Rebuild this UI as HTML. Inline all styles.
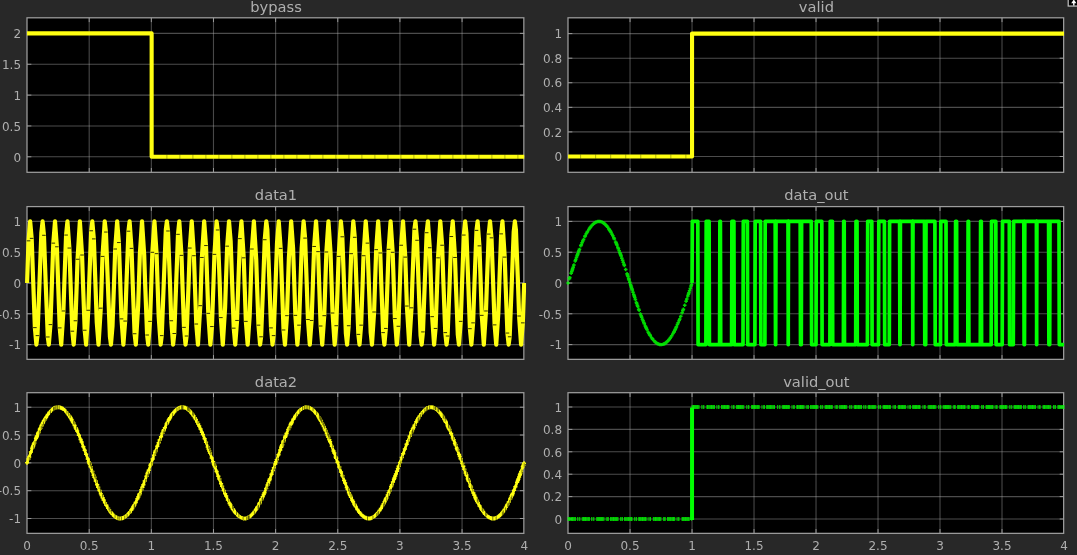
<!DOCTYPE html>
<html><head><meta charset="utf-8"><title>Scope</title>
<style>html,body{margin:0;padding:0;background:#282828;overflow:hidden}svg{display:block;filter:blur(0.4px)}</style></head>
<body>
<svg width="1077" height="555" viewBox="0 0 1077 555" font-family="'DejaVu Sans','Liberation Sans',sans-serif" fill="#afafaf">
<rect width="1077" height="555" fill="#282828"/>
<rect x="27.05" y="17.8" width="497.15" height="154.5" fill="#000"/>
<path d="M89.19 17.8V172.3M151.34 17.8V172.3M213.48 17.8V172.3M275.62 17.8V172.3M337.77 17.8V172.3M399.91 17.8V172.3M462.06 17.8V172.3" stroke="#b4b4b4" stroke-opacity="0.4" stroke-width="1.1" fill="none"/>
<path d="M27.05 156.8H524.2M27.05 125.95H524.2M27.05 95.1H524.2M27.05 64.25H524.2M27.05 33.4H524.2" stroke="#b4b4b4" stroke-opacity="0.42" stroke-width="1.1" fill="none"/>
<path d="M89.19 17.8v4.3M89.19 172.3v-4.3M151.34 17.8v4.3M151.34 172.3v-4.3M213.48 17.8v4.3M213.48 172.3v-4.3M275.62 17.8v4.3M275.62 172.3v-4.3M337.77 17.8v4.3M337.77 172.3v-4.3M399.91 17.8v4.3M399.91 172.3v-4.3M462.06 17.8v4.3M462.06 172.3v-4.3M27.05 156.8h4.3M524.2 156.8h-4.3M27.05 125.95h4.3M524.2 125.95h-4.3M27.05 95.1h4.3M524.2 95.1h-4.3M27.05 64.25h4.3M524.2 64.25h-4.3M27.05 33.4h4.3M524.2 33.4h-4.3" stroke="#afafaf" stroke-width="1" fill="none" opacity="0.8"/>
<rect x="27" y="17.8" width="496.85" height="154.5" fill="none" stroke="#9e9e9e" stroke-width="1.25"/>
<clipPath id="cbypass"><rect x="25.05" y="17.8" width="501.15" height="154.5"/></clipPath>
<g clip-path="url(#cbypass)">
<path d="M27.05 33.4H151.64V156.8H524.2" stroke="#ffff11" stroke-width="4.1" fill="none" stroke-linejoin="round"/>
<path d="M166.9 154.7v4.2M179.9 154.7v4.2M192.9 154.7v4.2M205.9 154.7v4.2M218.9 154.7v4.2M231.9 154.7v4.2M244.9 154.7v4.2M257.9 154.7v4.2M270.9 154.7v4.2M283.9 154.7v4.2M296.9 154.7v4.2M309.9 154.7v4.2M322.9 154.7v4.2M335.9 154.7v4.2M348.9 154.7v4.2M361.9 154.7v4.2M374.9 154.7v4.2M387.9 154.7v4.2M400.9 154.7v4.2M413.9 154.7v4.2M426.9 154.7v4.2M439.9 154.7v4.2M452.9 154.7v4.2M465.9 154.7v4.2M478.9 154.7v4.2M491.9 154.7v4.2M504.9 154.7v4.2M517.9 154.7v4.2" stroke="#000" stroke-width="1" fill="none" opacity="0.3"/>
</g>
<text x="276.02" y="11.8" font-size="14.67" text-anchor="middle">bypass</text>
<text x="21.05" y="161.5" font-size="12" text-anchor="end">0</text>
<text x="21.05" y="130.65" font-size="12" text-anchor="end">0.5</text>
<text x="21.05" y="99.8" font-size="12" text-anchor="end">1</text>
<text x="21.05" y="68.95" font-size="12" text-anchor="end">1.5</text>
<text x="21.05" y="38.1" font-size="12" text-anchor="end">2</text>
<rect x="568.05" y="17.8" width="495.95" height="154.5" fill="#000"/>
<path d="M630.04 17.8V172.3M692.04 17.8V172.3M754.03 17.8V172.3M816.02 17.8V172.3M878.02 17.8V172.3M940.01 17.8V172.3M1002.01 17.8V172.3" stroke="#b4b4b4" stroke-opacity="0.4" stroke-width="1.1" fill="none"/>
<path d="M568.05 156.5H1064M568.05 131.92H1064M568.05 107.34H1064M568.05 82.76H1064M568.05 58.18H1064M568.05 33.6H1064" stroke="#b4b4b4" stroke-opacity="0.42" stroke-width="1.1" fill="none"/>
<path d="M630.04 17.8v4.3M630.04 172.3v-4.3M692.04 17.8v4.3M692.04 172.3v-4.3M754.03 17.8v4.3M754.03 172.3v-4.3M816.02 17.8v4.3M816.02 172.3v-4.3M878.02 17.8v4.3M878.02 172.3v-4.3M940.01 17.8v4.3M940.01 172.3v-4.3M1002.01 17.8v4.3M1002.01 172.3v-4.3M568.05 156.5h4.3M1064 156.5h-4.3M568.05 131.92h4.3M1064 131.92h-4.3M568.05 107.34h4.3M1064 107.34h-4.3M568.05 82.76h4.3M1064 82.76h-4.3M568.05 58.18h4.3M1064 58.18h-4.3M568.05 33.6h4.3M1064 33.6h-4.3" stroke="#afafaf" stroke-width="1" fill="none" opacity="0.8"/>
<rect x="568" y="17.8" width="495.65" height="154.5" fill="none" stroke="#9e9e9e" stroke-width="1.25"/>
<clipPath id="cvalid"><rect x="566.05" y="17.8" width="499.95" height="154.5"/></clipPath>
<g clip-path="url(#cvalid)">
<path d="M568.05 156.5H692.04V33.6H1064" stroke="#ffff11" stroke-width="4.1" fill="none" stroke-linejoin="round"/>
<path d="M580.6 154.4v4.2M595.64 154.4v4.2M610.68 154.4v4.2M625.72 154.4v4.2M640.76 154.4v4.2M655.8 154.4v4.2M670.84 154.4v4.2M685.88 154.4v4.2" stroke="#000" stroke-width="1" fill="none" opacity="0.3"/>
</g>
<text x="816.42" y="11.8" font-size="14.67" text-anchor="middle">valid</text>
<text x="562.05" y="161.2" font-size="12" text-anchor="end">0</text>
<text x="562.05" y="136.62" font-size="12" text-anchor="end">0.2</text>
<text x="562.05" y="112.04" font-size="12" text-anchor="end">0.4</text>
<text x="562.05" y="87.46" font-size="12" text-anchor="end">0.6</text>
<text x="562.05" y="62.88" font-size="12" text-anchor="end">0.8</text>
<text x="562.05" y="38.3" font-size="12" text-anchor="end">1</text>
<rect x="27.05" y="206.6" width="497.15" height="152.75" fill="#000"/>
<path d="M89.19 206.6V359.35M151.34 206.6V359.35M213.48 206.6V359.35M275.62 206.6V359.35M337.77 206.6V359.35M399.91 206.6V359.35M462.06 206.6V359.35" stroke="#b4b4b4" stroke-opacity="0.4" stroke-width="1.1" fill="none"/>
<path d="M27.05 344.6H524.2M27.05 313.8H524.2M27.05 283H524.2M27.05 252.2H524.2M27.05 221.4H524.2" stroke="#b4b4b4" stroke-opacity="0.42" stroke-width="1.1" fill="none"/>
<path d="M89.19 206.6v4.3M89.19 359.35v-4.3M151.34 206.6v4.3M151.34 359.35v-4.3M213.48 206.6v4.3M213.48 359.35v-4.3M275.62 206.6v4.3M275.62 359.35v-4.3M337.77 206.6v4.3M337.77 359.35v-4.3M399.91 206.6v4.3M399.91 359.35v-4.3M462.06 206.6v4.3M462.06 359.35v-4.3M27.05 344.6h4.3M524.2 344.6h-4.3M27.05 313.8h4.3M524.2 313.8h-4.3M27.05 283h4.3M524.2 283h-4.3M27.05 252.2h4.3M524.2 252.2h-4.3M27.05 221.4h4.3M524.2 221.4h-4.3" stroke="#afafaf" stroke-width="1" fill="none" opacity="0.8"/>
<rect x="27" y="206.6" width="496.85" height="152.75" fill="none" stroke="#9e9e9e" stroke-width="1.25"/>
<clipPath id="cdata1"><rect x="25.05" y="206.6" width="501.15" height="152.75"/></clipPath>
<g clip-path="url(#cdata1)">
<path d="M27.05 283L28.54 240.83L30.16 221.4L31.66 238.36L33.26 283L34.87 327.64L36.37 344.6L37.45 335.62L39.48 283L41.37 232.71L42.59 221.4L43.94 235.29L45.69 283L47.81 336.98L48.8 344.6L50.44 324.6L51.91 283L53.3 243.14L55.01 221.4L56.88 246.79L58.12 283L59.74 327.9L61.23 344.6L63.4 310.97L64.34 283L66.1 235.05L67.44 221.4L69.36 248.06L70.55 283L72.33 331.2L73.66 344.6L75.46 320.76L76.77 283L77.55 259.25L79.87 221.4L82.05 255.03L82.98 283L84.71 330.22L86.09 344.6L88.29 310.27L89.19 283L91.19 230.78L92.3 221.4L93.83 238.9L95.41 283L96.76 321.97L98.52 344.6L100.79 308.17L101.62 283L102.5 256.42L104.73 221.4L105.91 232.05L107.84 283L109.9 336.22L110.94 344.6L112.53 325.73L114.05 283L115.21 249.02L117.16 221.4L118.85 242.55L120.27 283L121.5 318.89L123.37 344.6L125.16 321.06L126.48 283L128.46 231.2L129.59 221.4L131.51 248.38L132.69 283L134.61 333.73L135.8 344.6L138.15 306.04L138.91 283L139.88 254L142.02 221.4L144.19 255.03L145.12 283L147.11 335.01L148.23 344.6L150.01 321.36L151.34 283L152.37 252.31L154.44 221.4L156.57 253.66L157.55 283L158.68 316.33L160.66 344.6L161.74 335.62L163.77 283L165.87 229.21L166.87 221.4L167.99 230.99L169.98 283L171.29 320.76L173.09 344.6L174.29 333.51L176.2 283L178 234.33L179.3 221.4L181.49 255.38L182.41 283L184 327.37L185.52 344.6L186.57 336.02L188.62 283L189.82 248.06L191.73 221.4L193.93 255.73L194.84 283L196.28 324.03L197.95 344.6L200.31 305.68L201.05 283L201.9 257.47L204.16 221.4L205.97 245.55L207.27 283L208.29 313.35L210.37 344.6L211.93 326.56L213.48 283L214.44 254.35L216.59 221.4L217.64 229.98L219.7 283L220.88 317.62L222.8 344.6L225.1 307.46L225.91 283L227.18 246.17L229.02 221.4L230.65 241.11L232.12 283L233.75 328.17L235.23 344.6L237.05 320.45L238.34 283L239.93 238.63L241.45 221.4L243.72 257.83L244.55 283L245.88 321.36L247.66 344.6L249.64 316.33L250.77 283L251.92 249.02L253.87 221.4L256.21 259.61L256.98 283L258.47 325.17L260.09 344.6L261.1 336.79L263.2 283L264.74 239.72L266.3 221.4L267.32 229.4L269.41 283L271.03 327.9L272.52 344.6L273.6 335.62L275.62 283L277 243.44L278.73 221.4L280.66 248.38L281.84 283L283.55 329.97L284.95 344.6L286.95 315.68L288.05 283L288.89 257.83L291.16 221.4L293.07 248.06L294.27 283L295.36 315.35L297.38 344.6L298.99 325.17L300.48 283L301.66 248.38L303.59 221.4L305.08 238.1L306.7 283L307.95 319.52L309.8 344.6L311.62 320.45L312.91 283L314.17 246.48L316.02 221.4L318.07 251.64L319.13 283L320.65 326.01L322.23 344.6L324.23 315.68L325.34 283L326.38 251.98L328.45 221.4L330.54 252.65L331.55 283L332.56 313.01L334.66 344.6L336.25 325.73L337.77 283L338.65 256.42L340.88 221.4L342.31 236.79L343.98 283L345.87 333.29L347.09 344.6L348.68 325.73L350.2 283L351.18 253.66L353.3 221.4L354.76 237.31L356.41 283L358.36 334.38L359.52 344.6L361.13 325.17L362.63 283L363.53 255.73L365.73 221.4L367.45 243.14L368.84 283L370.69 332.61L371.95 344.6L374.09 312L375.06 283L376.19 249.67L378.16 221.4L380.26 252.99L381.27 283L383.12 332.61L384.38 344.6L385.84 328.43L387.48 283L388.63 249.34L390.59 221.4L392.67 252.31L393.7 283L394.92 318.58L396.81 344.6L398.37 326.28L399.91 283L401.22 245.24L403.02 221.4L405.27 257.12L406.13 283L406.89 306.04L409.23 344.6L411.52 307.82L412.34 283L414.44 229.21L415.45 221.4L417.04 240.27L418.56 283L420.57 335.42L421.66 344.6L422.96 331.91L424.77 283L426.66 232.71L427.88 221.4L429.78 247.74L430.98 283L432.13 316.66L434.09 344.6L435.56 328.43L437.2 283L438.03 257.83L440.31 221.4L442.11 245.24L443.41 283L445.27 332.61L446.52 344.6L447.58 336.02L449.63 283L451.32 236.54L452.73 221.4L455 257.47L455.84 283L457.82 334.8L458.95 344.6L460.73 321.36L462.06 283L463.82 235.05L465.16 221.4L466.39 232.94L468.27 283L469.92 328.69L471.38 344.6L473.09 322.86L474.49 283L476.51 230.38L477.59 221.4L479.42 245.86L480.7 283L481.79 315.35L483.81 344.6L485.98 310.97L486.91 283L488.73 234.09L490.02 221.4L491.5 237.83L493.13 283L494.61 324.89L496.24 344.6L498.35 312.68L499.34 283L501.17 233.86L502.45 221.4L504.7 257.12L505.56 283L507.43 333.06L508.66 344.6L509.67 336.79L511.77 283L513.7 232.05L514.88 221.4L515.93 229.98L517.99 283L519.1 316.01L521.09 344.6L522.81 322.86L524.2 283" stroke="#ffff11" stroke-width="4.2" fill="none" stroke-linejoin="round"/>
<path d="M26.74 240.83h3.6M29.86 238.36h3.6M33.07 327.64h3.6M35.65 335.62h3.6M42.14 235.29h3.6M46.01 336.98h3.6M48.64 324.6h3.6M51.5 243.14h3.6M55.08 246.79h3.6M57.94 327.9h3.6M61.6 310.97h3.6M64.3 235.05h3.6M67.56 248.06h3.6M70.53 331.2h3.6M73.66 320.76h3.6M75.75 259.25h3.6M80.25 255.03h3.6M82.91 330.22h3.6M86.49 310.27h3.6M89.39 230.78h3.6M92.03 238.9h3.6M98.99 308.17h3.6M100.7 256.42h3.6M104.11 232.05h3.6M113.41 249.02h3.6M117.05 242.55h3.6M119.7 318.89h3.6M123.36 321.06h3.6M126.66 231.2h3.6M129.71 248.38h3.6M132.81 333.73h3.6M145.31 335.01h3.6M148.21 321.36h3.6M150.57 252.31h3.6M154.77 253.66h3.6M159.94 335.62h3.6M166.19 230.99h3.6M169.49 320.76h3.6M172.49 333.51h3.6M176.2 234.33h3.6M179.69 255.38h3.6M182.2 327.37h3.6M184.77 336.02h3.6M188.02 248.06h3.6M192.13 255.73h3.6M194.48 324.03h3.6M198.51 305.68h3.6M200.1 257.47h3.6M204.17 245.55h3.6M206.49 313.35h3.6M210.13 326.56h3.6M212.64 254.35h3.6M215.84 229.98h3.6M219.08 317.62h3.6M225.38 246.17h3.6M231.95 328.17h3.6M235.25 320.45h3.6M238.13 238.63h3.6M241.92 257.83h3.6M244.08 321.36h3.6M250.12 249.02h3.6M256.67 325.17h3.6M259.3 336.79h3.6M262.94 239.72h3.6M269.23 327.9h3.6M271.8 335.62h3.6M278.86 248.38h3.6M281.75 329.97h3.6M285.15 315.68h3.6M293.56 315.35h3.6M297.19 325.17h3.6M303.28 238.1h3.6M306.15 319.52h3.6M309.82 320.45h3.6M312.37 246.48h3.6M316.27 251.64h3.6M318.85 326.01h3.6M322.43 315.68h3.6M324.58 251.98h3.6M330.76 313.01h3.6M334.45 325.73h3.6M336.85 256.42h3.6M340.51 236.79h3.6M346.88 325.73h3.6M349.38 253.66h3.6M352.96 237.31h3.6M356.56 334.38h3.6M359.33 325.17h3.6M361.73 255.73h3.6M365.65 243.14h3.6M372.29 312h3.6M374.39 249.67h3.6M378.46 252.99h3.6M381.32 332.61h3.6M384.04 328.43h3.6M386.83 249.34h3.6M390.87 252.31h3.6M393.12 318.58h3.6M396.57 326.28h3.6M399.42 245.24h3.6M403.47 257.12h3.6M405.09 306.04h3.6M409.72 307.82h3.6M412.64 229.21h3.6M415.24 240.27h3.6M421.16 331.91h3.6M424.86 232.71h3.6M427.98 247.74h3.6M430.33 316.66h3.6M433.76 328.43h3.6M436.23 257.83h3.6M440.31 245.24h3.6M443.47 332.61h3.6M445.78 336.02h3.6M449.52 236.54h3.6M453.2 257.47h3.6M458.93 321.36h3.6M462.02 235.05h3.6M468.12 328.69h3.6M471.29 322.86h3.6M474.71 230.38h3.6M477.62 245.86h3.6M479.99 315.35h3.6M484.18 310.97h3.6M486.93 234.09h3.6M489.7 237.83h3.6M492.81 324.89h3.6M499.37 233.86h3.6M502.9 257.12h3.6M505.63 333.06h3.6M507.87 336.79h3.6M517.3 316.01h3.6M521.01 322.86h3.6" stroke="#111100" stroke-width="1" fill="none" opacity="0.85"/>
</g>
<text x="276.02" y="199.9" font-size="14.67" text-anchor="middle">data1</text>
<text x="21.05" y="349.3" font-size="12" text-anchor="end">-1</text>
<text x="21.05" y="318.5" font-size="12" text-anchor="end">-0.5</text>
<text x="21.05" y="287.7" font-size="12" text-anchor="end">0</text>
<text x="21.05" y="256.9" font-size="12" text-anchor="end">0.5</text>
<text x="21.05" y="226.1" font-size="12" text-anchor="end">1</text>
<rect x="568.05" y="206.6" width="495.95" height="152.75" fill="#000"/>
<path d="M630.04 206.6V359.35M692.04 206.6V359.35M754.03 206.6V359.35M816.02 206.6V359.35M878.02 206.6V359.35M940.01 206.6V359.35M1002.01 206.6V359.35" stroke="#b4b4b4" stroke-opacity="0.4" stroke-width="1.1" fill="none"/>
<path d="M568.05 344.6H1064M568.05 313.8H1064M568.05 283H1064M568.05 252.2H1064M568.05 221.4H1064" stroke="#b4b4b4" stroke-opacity="0.42" stroke-width="1.1" fill="none"/>
<path d="M630.04 206.6v4.3M630.04 359.35v-4.3M692.04 206.6v4.3M692.04 359.35v-4.3M754.03 206.6v4.3M754.03 359.35v-4.3M816.02 206.6v4.3M816.02 359.35v-4.3M878.02 206.6v4.3M878.02 359.35v-4.3M940.01 206.6v4.3M940.01 359.35v-4.3M1002.01 206.6v4.3M1002.01 359.35v-4.3M568.05 344.6h4.3M1064 344.6h-4.3M568.05 313.8h4.3M1064 313.8h-4.3M568.05 283h4.3M1064 283h-4.3M568.05 252.2h4.3M1064 252.2h-4.3M568.05 221.4h4.3M1064 221.4h-4.3" stroke="#afafaf" stroke-width="1" fill="none" opacity="0.8"/>
<rect x="568" y="206.6" width="495.65" height="152.75" fill="none" stroke="#9e9e9e" stroke-width="1.25"/>
<clipPath id="cdata_out"><rect x="566.05" y="206.6" width="499.95" height="152.75"/></clipPath>
<g clip-path="url(#cdata_out)">
<path d="M566.25 283h3.6M568.05 281.3v3.4M567.61 278.75h3.6M569.41 277.05v3.4M567.99 277.59h3.6M569.79 275.89v3.4M569.35 273.36h3.6M571.15 271.66v3.4M569.97 271.46h3.6M571.77 269.76v3.4M570.47 269.94h3.6M572.27 268.24v3.4M570.84 268.81h3.6M572.64 267.11v3.4M571.33 267.31h3.6M573.13 265.61v3.4M572.08 265.07h3.6M573.88 263.37v3.4M573.44 261.05h3.6M575.24 259.35v3.4M573.94 259.61h3.6M575.74 257.91v3.4M574.68 257.47h3.6M576.48 255.77v3.4M575.3 255.73h3.6M577.1 254.03v3.4M575.67 254.69h3.6M577.47 252.99v3.4M576.05 253.66h3.6M577.85 251.96v3.4M576.79 251.64h3.6M578.59 249.94v3.4M577.16 250.65h3.6M578.96 248.95v3.4M577.66 249.34h3.6M579.46 247.64v3.4M579.02 245.86h3.6M580.82 244.16v3.4M579.52 244.64h3.6M581.32 242.94v3.4M580.26 242.85h3.6M582.06 241.15v3.4M581 241.11h3.6M582.8 239.41v3.4M581.75 239.44h3.6M583.55 237.74v3.4M583.11 236.54h3.6M584.91 234.84v3.4M583.48 235.78h3.6M585.28 234.08v3.4M584.48 233.86h3.6M586.28 232.16v3.4M585.22 232.49h3.6M587.02 230.79v3.4M585.72 231.62h3.6M587.52 229.92v3.4M587.08 229.4h3.6M588.88 227.7v3.4M587.82 228.29h3.6M589.62 226.59v3.4M588.44 227.43h3.6M590.24 225.73v3.4M588.82 226.94h3.6M590.62 225.24v3.4M589.56 226.02h3.6M591.36 224.32v3.4M590.3 225.17h3.6M592.1 223.47v3.4M591.67 223.85h3.6M593.47 222.15v3.4M592.41 223.24h3.6M594.21 221.54v3.4M593.16 222.72h3.6M594.96 221.02v3.4M593.65 222.42h3.6M595.45 220.72v3.4M594.4 222.04h3.6M596.2 220.34v3.4M594.77 221.89h3.6M596.57 220.19v3.4M596.13 221.5h3.6M597.93 219.8v3.4M596.75 221.42h3.6M598.55 219.72v3.4M597.37 221.4h3.6M599.17 219.7v3.4M597.99 221.44h3.6M599.79 219.74v3.4M598.73 221.58h3.6M600.53 219.88v3.4M599.73 221.89h3.6M601.53 220.19v3.4M600.35 222.16h3.6M602.15 220.46v3.4M601.34 222.72h3.6M603.14 221.02v3.4M602.08 223.24h3.6M603.88 221.54v3.4M602.58 223.63h3.6M604.38 221.93v3.4M602.95 223.96h3.6M604.75 222.26v3.4M603.45 224.41h3.6M605.25 222.71v3.4M604.07 225.04h3.6M605.87 223.34v3.4M604.69 225.73h3.6M606.49 224.03v3.4M605.18 226.31h3.6M606.98 224.61v3.4M605.93 227.26h3.6M607.73 225.56v3.4M606.92 228.65h3.6M608.72 226.95v3.4M607.41 229.4h3.6M609.21 227.7v3.4M607.91 230.18h3.6M609.71 228.48v3.4M608.41 230.99h3.6M610.21 229.29v3.4M608.78 231.62h3.6M610.58 229.92v3.4M609.27 232.49h3.6M611.07 230.79v3.4M610.27 234.33h3.6M612.07 232.63v3.4M611.01 235.78h3.6M612.81 234.08v3.4M612 237.83h3.6M613.8 236.13v3.4M612.5 238.9h3.6M614.3 237.2v3.4M613.86 241.97h3.6M615.66 240.27v3.4M614.23 242.85h3.6M616.03 241.15v3.4M614.73 244.03h3.6M616.53 242.33v3.4M615.1 244.94h3.6M616.9 243.24v3.4M616.09 247.42h3.6M617.89 245.72v3.4M616.59 248.7h3.6M618.39 247v3.4M617.33 250.65h3.6M619.13 248.95v3.4M618.08 252.65h3.6M619.88 250.95v3.4M618.57 254h3.6M620.37 252.3v3.4M618.94 255.03h3.6M620.74 253.33v3.4M619.32 256.07h3.6M621.12 254.37v3.4M620.06 258.18h3.6M621.86 256.48v3.4M620.8 260.32h3.6M622.6 258.62v3.4M621.42 262.13h3.6M623.22 260.43v3.4M622.17 264.33h3.6M623.97 262.63v3.4M622.54 265.44h3.6M624.34 263.74v3.4M623.9 269.56h3.6M625.7 267.86v3.4M625.27 273.75h3.6M627.07 272.05v3.4M625.64 274.9h3.6M627.44 273.2v3.4M626.14 276.43h3.6M627.94 274.73v3.4M626.88 278.75h3.6M628.68 277.05v3.4M627.25 279.9h3.6M629.05 278.2v3.4M628 282.23h3.6M629.8 280.53v3.4M628.74 284.55h3.6M630.54 282.85v3.4M629.11 285.71h3.6M630.91 284.01v3.4M629.61 287.25h3.6M631.41 285.55v3.4M630.1 288.8h3.6M631.9 287.1v3.4M630.48 289.95h3.6M632.28 288.25v3.4M631.22 292.25h3.6M633.02 290.55v3.4M631.96 294.54h3.6M633.76 292.84v3.4M632.46 296.06h3.6M634.26 294.36v3.4M632.96 297.57h3.6M634.76 295.87v3.4M633.58 299.44h3.6M635.38 297.74v3.4M634.57 302.4h3.6M636.37 300.7v3.4M634.94 303.5h3.6M636.74 301.8v3.4M635.56 305.32h3.6M637.36 303.62v3.4M635.93 306.39h3.6M637.73 304.69v3.4M636.92 309.23h3.6M638.72 307.53v3.4M637.29 310.27h3.6M639.09 308.57v3.4M638.66 314.02h3.6M640.46 312.32v3.4M639.28 315.68h3.6M641.08 313.98v3.4M639.9 317.3h3.6M641.7 315.6v3.4M640.64 319.21h3.6M642.44 317.51v3.4M641.26 320.76h3.6M643.06 319.06v3.4M642.01 322.56h3.6M643.81 320.86v3.4M642.5 323.74h3.6M644.3 322.04v3.4M643.49 326.01h3.6M645.29 324.31v3.4M644.11 327.37h3.6M645.91 325.67v3.4M644.49 328.17h3.6M646.29 326.47v3.4M645.11 329.46h3.6M646.91 327.76v3.4M646.47 332.14h3.6M648.27 330.44v3.4M647.09 333.29h3.6M648.89 331.59v3.4M647.71 334.38h3.6M649.51 332.68v3.4M648.08 335.01h3.6M649.88 333.31v3.4M648.45 335.62h3.6M650.25 333.92v3.4M649.82 337.71h3.6M651.62 336.01v3.4M650.56 338.74h3.6M652.36 337.04v3.4M650.93 339.22h3.6M652.73 337.52v3.4M651.93 340.42h3.6M653.73 338.72v3.4M652.92 341.46h3.6M654.72 339.76v3.4M653.29 341.82h3.6M655.09 340.12v3.4M653.66 342.15h3.6M655.46 340.45v3.4M654.03 342.47h3.6M655.83 340.77v3.4M655.4 343.44h3.6M657.2 341.74v3.4M655.77 343.65h3.6M657.57 341.95v3.4M656.14 343.84h3.6M657.94 342.14v3.4M656.64 344.06h3.6M658.44 342.36v3.4M657.63 344.39h3.6M659.43 342.69v3.4M658 344.48h3.6M659.8 342.78v3.4M658.74 344.58h3.6M660.54 342.88v3.4M659.12 344.6h3.6M660.92 342.9v3.4M659.61 344.59h3.6M661.41 342.89v3.4M660.98 344.36h3.6M662.78 342.66v3.4M661.97 344.01h3.6M663.77 342.31v3.4M662.59 343.72h3.6M664.39 342.02v3.4M663.08 343.44h3.6M664.88 341.74v3.4M663.83 342.94h3.6M665.63 341.24v3.4M664.45 342.47h3.6M666.25 340.77v3.4M665.19 341.82h3.6M666.99 340.12v3.4M665.81 341.22h3.6M667.61 339.52v3.4M667.18 339.69h3.6M668.98 337.99v3.4M667.55 339.22h3.6M669.35 337.52v3.4M668.29 338.23h3.6M670.09 336.53v3.4M668.91 337.35h3.6M670.71 335.65v3.4M669.9 335.82h3.6M671.7 334.12v3.4M671.27 333.51h3.6M673.07 331.81v3.4M672.01 332.14h3.6M673.81 330.44v3.4M672.38 331.44h3.6M674.18 329.74v3.4M673 330.22h3.6M674.8 328.52v3.4M673.5 329.21h3.6M675.3 327.51v3.4M674.24 327.64h3.6M676.04 325.94v3.4M674.62 326.83h3.6M676.42 325.13v3.4M675.61 324.6h3.6M677.41 322.9v3.4M676.35 322.86h3.6M678.15 321.16v3.4M677.34 320.45h3.6M679.14 318.75v3.4M677.96 318.89h3.6M679.76 317.19v3.4M678.95 316.33h3.6M680.75 314.63v3.4M680.32 312.68h3.6M682.12 310.98v3.4M681.06 310.62h3.6M682.86 308.92v3.4M681.56 309.23h3.6M683.36 307.53v3.4M682.92 305.32h3.6M684.72 303.62v3.4M684.29 301.3h3.6M686.09 299.6v3.4M685.03 299.07h3.6M686.83 297.37v3.4M686.02 296.06h3.6M687.82 294.36v3.4M686.64 294.16h3.6M688.44 292.46v3.4M687.14 292.64h3.6M688.94 290.94v3.4M687.76 290.72h3.6M689.56 289.02v3.4M688.5 288.41h3.6M690.3 286.71v3.4M689.25 286.1h3.6M691.05 284.4v3.4M689.74 284.55h3.6M691.54 282.85v3.4" stroke="#00ff00" stroke-width="1.5" fill="none" opacity="0.85"/>
<path d="M692.04 283L692.3 221.4L697.8 221.4L698.1 344.6L705.9 344.6L706.2 221.4L709.1 221.4L709.4 344.6L719.6 344.6L719.9 221.4L720.4 221.4L720.7 344.6L731.6 344.6L731.9 221.4L733.9 221.4L734.2 344.6L743 344.6L743.3 221.4L747.4 221.4L747.7 344.6L754.9 344.6L755.2 221.4L760.6 221.4L760.9 344.6L764.9 344.6L765.2 221.4L775.2 221.4L775.5 344.6L775.7 344.6L776 221.4L788 221.4L788.3 344.6L788.2 344.6L788.5 221.4L800.2 221.4L800.5 344.6L801.3 344.6L801.6 221.4L811.3 221.4L811.6 344.6L816 344.6L816.3 221.4L821.8 221.4L822.1 344.6L829.9 344.6L830.2 221.4L832.4 221.4L832.7 344.6L843.4 344.6L843.7 221.4L844.2 221.4L844.5 344.6L855.7 344.6L856 221.4L857 221.4L857.3 344.6L867.4 344.6L867.7 221.4L871.8 221.4L872.1 344.6L878.5 344.6L878.8 221.4L884.4 221.4L884.7 344.6L889.3 344.6L889.6 221.4L899.6 221.4L899.9 344.6L900.1 344.6L900.4 221.4L912.5 221.4L912.8 344.6L912.7 344.6L913 221.4L924.5 221.4L924.8 344.6L925.7 344.6L926 221.4L934.9 221.4L935.2 344.6L940.5 344.6L940.8 221.4L946 221.4L946.3 344.6L955.3 344.6L955.6 221.4L956.6 221.4L956.9 344.6L967.8 344.6L968.1 221.4L968.6 221.4L968.9 344.6L980.3 344.6L980.6 221.4L981.3 221.4L981.6 344.6L991.2 344.6L991.5 221.4L995.8 221.4L996.1 344.6L1002.2 344.6L1002.5 221.4L1009.3 221.4L1009.6 344.6L1013.3 344.6L1013.6 221.4L1023.8 221.4L1024.1 344.6L1024.5 344.6L1024.8 221.4L1036.4 221.4L1036.7 344.6L1036.6 344.6L1036.9 221.4L1048.6 221.4L1048.9 344.6L1049.7 344.6L1050 221.4L1059 221.4L1059.3 344.6L1064 344.6" stroke="#00ff00" stroke-width="3.7" fill="none" stroke-linejoin="round"/>
</g>
<text x="816.42" y="199.9" font-size="14.67" text-anchor="middle">data_out</text>
<text x="562.05" y="349.3" font-size="12" text-anchor="end">-1</text>
<text x="562.05" y="318.5" font-size="12" text-anchor="end">-0.5</text>
<text x="562.05" y="287.7" font-size="12" text-anchor="end">0</text>
<text x="562.05" y="256.9" font-size="12" text-anchor="end">0.5</text>
<text x="562.05" y="226.1" font-size="12" text-anchor="end">1</text>
<rect x="27.05" y="392.7" width="497.15" height="140.65" fill="#000"/>
<path d="M89.19 392.7V533.35M151.34 392.7V533.35M213.48 392.7V533.35M275.62 392.7V533.35M337.77 392.7V533.35M399.91 392.7V533.35M462.06 392.7V533.35" stroke="#b4b4b4" stroke-opacity="0.4" stroke-width="1.1" fill="none"/>
<path d="M27.05 518.5H524.2M27.05 490.68H524.2M27.05 462.85H524.2M27.05 435.02H524.2M27.05 407.2H524.2" stroke="#b4b4b4" stroke-opacity="0.42" stroke-width="1.1" fill="none"/>
<path d="M89.19 392.7v4.3M89.19 533.35v-4.3M151.34 392.7v4.3M151.34 533.35v-4.3M213.48 392.7v4.3M213.48 533.35v-4.3M275.62 392.7v4.3M275.62 533.35v-4.3M337.77 392.7v4.3M337.77 533.35v-4.3M399.91 392.7v4.3M399.91 533.35v-4.3M462.06 392.7v4.3M462.06 533.35v-4.3M27.05 518.5h4.3M524.2 518.5h-4.3M27.05 490.68h4.3M524.2 490.68h-4.3M27.05 462.85h4.3M524.2 462.85h-4.3M27.05 435.02h4.3M524.2 435.02h-4.3M27.05 407.2h4.3M524.2 407.2h-4.3" stroke="#afafaf" stroke-width="1" fill="none" opacity="0.8"/>
<rect x="27" y="392.7" width="496.85" height="140.65" fill="none" stroke="#9e9e9e" stroke-width="1.25"/>
<clipPath id="cdata2"><rect x="25.05" y="392.7" width="501.15" height="140.65"/></clipPath>
<g clip-path="url(#cdata2)">
<path d="M27.05 462.85L27.67 461.1L28.29 459.36L28.91 457.61L29.54 455.88L30.16 454.14L30.78 452.42L31.4 450.71L32.02 449.01L32.64 447.32L33.26 445.65L33.89 444L34.51 442.36L35.13 440.75L35.75 439.16L36.37 437.59L36.99 436.04L37.61 434.52L38.24 433.03L38.86 431.57L39.48 430.14L40.1 428.74L40.72 427.38L41.34 426.05L41.96 424.75L42.59 423.5L43.21 422.28L43.83 421.11L44.45 419.97L45.07 418.88L45.69 417.83L46.31 416.82L46.94 415.86L47.56 414.95L48.18 414.08L48.8 413.27L49.42 412.5L50.04 411.78L50.66 411.11L51.29 410.49L51.91 409.92L52.53 409.41L53.15 408.95L53.77 408.54L54.39 408.19L55.01 407.89L55.64 407.64L56.26 407.45L56.88 407.31L57.5 407.23L58.12 407.2L58.74 407.23L59.36 407.31L59.99 407.45L60.61 407.64L61.23 407.89L61.85 408.19L62.47 408.54L63.09 408.95L63.71 409.41L64.34 409.92L64.96 410.49L65.58 411.11L66.2 411.78L66.82 412.5L67.44 413.27L68.06 414.08L68.69 414.95L69.31 415.86L69.93 416.82L70.55 417.83L71.17 418.88L71.79 419.97L72.41 421.11L73.04 422.28L73.66 423.5L74.28 424.75L74.9 426.05L75.52 427.38L76.14 428.74L76.77 430.14L77.39 431.57L78.01 433.03L78.63 434.52L79.25 436.04L79.87 437.59L80.49 439.16L81.12 440.75L81.74 442.36L82.36 444L82.98 445.65L83.6 447.32L84.22 449.01L84.84 450.71L85.47 452.42L86.09 454.14L86.71 455.88L87.33 457.61L87.95 459.36L88.57 461.1L89.19 462.85L89.82 464.6L90.44 466.34L91.06 468.09L91.68 469.82L92.3 471.56L92.92 473.28L93.54 474.99L94.17 476.69L94.79 478.38L95.41 480.05L96.03 481.7L96.65 483.34L97.27 484.95L97.89 486.54L98.52 488.11L99.14 489.66L99.76 491.18L100.38 492.67L101 494.13L101.62 495.56L102.24 496.96L102.87 498.32L103.49 499.65L104.11 500.95L104.73 502.2L105.35 503.42L105.97 504.59L106.59 505.73L107.22 506.82L107.84 507.87L108.46 508.88L109.08 509.84L109.7 510.75L110.32 511.62L110.94 512.43L111.57 513.2L112.19 513.92L112.81 514.59L113.43 515.21L114.05 515.78L114.67 516.29L115.29 516.75L115.92 517.16L116.54 517.51L117.16 517.81L117.78 518.06L118.4 518.25L119.02 518.39L119.64 518.47L120.27 518.5L120.89 518.47L121.51 518.39L122.13 518.25L122.75 518.06L123.37 517.81L123.99 517.51L124.62 517.16L125.24 516.75L125.86 516.29L126.48 515.78L127.1 515.21L127.72 514.59L128.34 513.92L128.97 513.2L129.59 512.43L130.21 511.62L130.83 510.75L131.45 509.84L132.07 508.88L132.69 507.87L133.32 506.82L133.94 505.73L134.56 504.59L135.18 503.42L135.8 502.2L136.42 500.95L137.04 499.65L137.67 498.32L138.29 496.96L138.91 495.56L139.53 494.13L140.15 492.67L140.77 491.18L141.39 489.66L142.02 488.11L142.64 486.54L143.26 484.95L143.88 483.34L144.5 481.7L145.12 480.05L145.74 478.38L146.37 476.69L146.99 474.99L147.61 473.28L148.23 471.56L148.85 469.82L149.47 468.09L150.09 466.34L150.72 464.6L151.34 462.85L151.96 461.1L152.58 459.36L153.2 457.61L153.82 455.88L154.44 454.14L155.07 452.42L155.69 450.71L156.31 449.01L156.93 447.32L157.55 445.65L158.17 444L158.79 442.36L159.42 440.75L160.04 439.16L160.66 437.59L161.28 436.04L161.9 434.52L162.52 433.03L163.14 431.57L163.77 430.14L164.39 428.74L165.01 427.38L165.63 426.05L166.25 424.75L166.87 423.5L167.49 422.28L168.12 421.11L168.74 419.97L169.36 418.88L169.98 417.83L170.6 416.82L171.22 415.86L171.84 414.95L172.47 414.08L173.09 413.27L173.71 412.5L174.33 411.78L174.95 411.11L175.57 410.49L176.2 409.92L176.82 409.41L177.44 408.95L178.06 408.54L178.68 408.19L179.3 407.89L179.92 407.64L180.55 407.45L181.17 407.31L181.79 407.23L182.41 407.2L183.03 407.23L183.65 407.31L184.27 407.45L184.9 407.64L185.52 407.89L186.14 408.19L186.76 408.54L187.38 408.95L188 409.41L188.62 409.92L189.25 410.49L189.87 411.11L190.49 411.78L191.11 412.5L191.73 413.27L192.35 414.08L192.97 414.95L193.6 415.86L194.22 416.82L194.84 417.83L195.46 418.88L196.08 419.97L196.7 421.11L197.32 422.28L197.95 423.5L198.57 424.75L199.19 426.05L199.81 427.38L200.43 428.74L201.05 430.14L201.67 431.57L202.3 433.03L202.92 434.52L203.54 436.04L204.16 437.59L204.78 439.16L205.4 440.75L206.02 442.36L206.65 444L207.27 445.65L207.89 447.32L208.51 449.01L209.13 450.71L209.75 452.42L210.37 454.14L211 455.88L211.62 457.61L212.24 459.36L212.86 461.1L213.48 462.85L214.1 464.6L214.72 466.34L215.35 468.09L215.97 469.82L216.59 471.56L217.21 473.28L217.83 474.99L218.45 476.69L219.07 478.38L219.7 480.05L220.32 481.7L220.94 483.34L221.56 484.95L222.18 486.54L222.8 488.11L223.42 489.66L224.05 491.18L224.67 492.67L225.29 494.13L225.91 495.56L226.53 496.96L227.15 498.32L227.77 499.65L228.4 500.95L229.02 502.2L229.64 503.42L230.26 504.59L230.88 505.73L231.5 506.82L232.12 507.87L232.75 508.88L233.37 509.84L233.99 510.75L234.61 511.62L235.23 512.43L235.85 513.2L236.47 513.92L237.1 514.59L237.72 515.21L238.34 515.78L238.96 516.29L239.58 516.75L240.2 517.16L240.82 517.51L241.45 517.81L242.07 518.06L242.69 518.25L243.31 518.39L243.93 518.47L244.55 518.5L245.17 518.47L245.8 518.39L246.42 518.25L247.04 518.06L247.66 517.81L248.28 517.51L248.9 517.16L249.52 516.75L250.15 516.29L250.77 515.78L251.39 515.21L252.01 514.59L252.63 513.92L253.25 513.2L253.87 512.43L254.5 511.62L255.12 510.75L255.74 509.84L256.36 508.88L256.98 507.87L257.6 506.82L258.22 505.73L258.85 504.59L259.47 503.42L260.09 502.2L260.71 500.95L261.33 499.65L261.95 498.32L262.57 496.96L263.2 495.56L263.82 494.13L264.44 492.67L265.06 491.18L265.68 489.66L266.3 488.11L266.92 486.54L267.55 484.95L268.17 483.34L268.79 481.7L269.41 480.05L270.03 478.38L270.65 476.69L271.27 474.99L271.9 473.28L272.52 471.56L273.14 469.82L273.76 468.09L274.38 466.34L275 464.6L275.62 462.85L276.25 461.1L276.87 459.36L277.49 457.61L278.11 455.88L278.73 454.14L279.35 452.42L279.98 450.71L280.6 449.01L281.22 447.32L281.84 445.65L282.46 444L283.08 442.36L283.7 440.75L284.33 439.16L284.95 437.59L285.57 436.04L286.19 434.52L286.81 433.03L287.43 431.57L288.05 430.14L288.68 428.74L289.3 427.38L289.92 426.05L290.54 424.75L291.16 423.5L291.78 422.28L292.4 421.11L293.03 419.97L293.65 418.88L294.27 417.83L294.89 416.82L295.51 415.86L296.13 414.95L296.75 414.08L297.38 413.27L298 412.5L298.62 411.78L299.24 411.11L299.86 410.49L300.48 409.92L301.1 409.41L301.73 408.95L302.35 408.54L302.97 408.19L303.59 407.89L304.21 407.64L304.83 407.45L305.45 407.31L306.08 407.23L306.7 407.2L307.32 407.23L307.94 407.31L308.56 407.45L309.18 407.64L309.8 407.89L310.43 408.19L311.05 408.54L311.67 408.95L312.29 409.41L312.91 409.92L313.53 410.49L314.15 411.11L314.78 411.78L315.4 412.5L316.02 413.27L316.64 414.08L317.26 414.95L317.88 415.86L318.5 416.82L319.13 417.83L319.75 418.88L320.37 419.97L320.99 421.11L321.61 422.28L322.23 423.5L322.85 424.75L323.48 426.05L324.1 427.38L324.72 428.74L325.34 430.14L325.96 431.57L326.58 433.03L327.2 434.52L327.83 436.04L328.45 437.59L329.07 439.16L329.69 440.75L330.31 442.36L330.93 444L331.55 445.65L332.18 447.32L332.8 449.01L333.42 450.71L334.04 452.42L334.66 454.14L335.28 455.88L335.9 457.61L336.53 459.36L337.15 461.1L337.77 462.85L338.39 464.6L339.01 466.34L339.63 468.09L340.25 469.82L340.88 471.56L341.5 473.28L342.12 474.99L342.74 476.69L343.36 478.38L343.98 480.05L344.6 481.7L345.23 483.34L345.85 484.95L346.47 486.54L347.09 488.11L347.71 489.66L348.33 491.18L348.95 492.67L349.58 494.13L350.2 495.56L350.82 496.96L351.44 498.32L352.06 499.65L352.68 500.95L353.3 502.2L353.93 503.42L354.55 504.59L355.17 505.73L355.79 506.82L356.41 507.87L357.03 508.88L357.65 509.84L358.28 510.75L358.9 511.62L359.52 512.43L360.14 513.2L360.76 513.92L361.38 514.59L362 515.21L362.63 515.78L363.25 516.29L363.87 516.75L364.49 517.16L365.11 517.51L365.73 517.81L366.35 518.06L366.98 518.25L367.6 518.39L368.22 518.47L368.84 518.5L369.46 518.47L370.08 518.39L370.7 518.25L371.33 518.06L371.95 517.81L372.57 517.51L373.19 517.16L373.81 516.75L374.43 516.29L375.06 515.78L375.68 515.21L376.3 514.59L376.92 513.92L377.54 513.2L378.16 512.43L378.78 511.62L379.41 510.75L380.03 509.84L380.65 508.88L381.27 507.87L381.89 506.82L382.51 505.73L383.13 504.59L383.76 503.42L384.38 502.2L385 500.95L385.62 499.65L386.24 498.32L386.86 496.96L387.48 495.56L388.11 494.13L388.73 492.67L389.35 491.18L389.97 489.66L390.59 488.11L391.21 486.54L391.83 484.95L392.46 483.34L393.08 481.7L393.7 480.05L394.32 478.38L394.94 476.69L395.56 474.99L396.18 473.28L396.81 471.56L397.43 469.82L398.05 468.09L398.67 466.34L399.29 464.6L399.91 462.85L400.53 461.1L401.16 459.36L401.78 457.61L402.4 455.88L403.02 454.14L403.64 452.42L404.26 450.71L404.88 449.01L405.51 447.32L406.13 445.65L406.75 444L407.37 442.36L407.99 440.75L408.61 439.16L409.23 437.59L409.86 436.04L410.48 434.52L411.1 433.03L411.72 431.57L412.34 430.14L412.96 428.74L413.58 427.38L414.21 426.05L414.83 424.75L415.45 423.5L416.07 422.28L416.69 421.11L417.31 419.97L417.93 418.88L418.56 417.83L419.18 416.82L419.8 415.86L420.42 414.95L421.04 414.08L421.66 413.27L422.28 412.5L422.91 411.78L423.53 411.11L424.15 410.49L424.77 409.92L425.39 409.41L426.01 408.95L426.63 408.54L427.26 408.19L427.88 407.89L428.5 407.64L429.12 407.45L429.74 407.31L430.36 407.23L430.98 407.2L431.61 407.23L432.23 407.31L432.85 407.45L433.47 407.64L434.09 407.89L434.71 408.19L435.33 408.54L435.96 408.95L436.58 409.41L437.2 409.92L437.82 410.49L438.44 411.11L439.06 411.78L439.68 412.5L440.31 413.27L440.93 414.08L441.55 414.95L442.17 415.86L442.79 416.82L443.41 417.83L444.03 418.88L444.66 419.97L445.28 421.11L445.9 422.28L446.52 423.5L447.14 424.75L447.76 426.05L448.38 427.38L449.01 428.74L449.63 430.14L450.25 431.57L450.87 433.03L451.49 434.52L452.11 436.04L452.73 437.59L453.36 439.16L453.98 440.75L454.6 442.36L455.22 444L455.84 445.65L456.46 447.32L457.08 449.01L457.71 450.71L458.33 452.42L458.95 454.14L459.57 455.88L460.19 457.61L460.81 459.36L461.43 461.1L462.06 462.85L462.68 464.6L463.3 466.34L463.92 468.09L464.54 469.82L465.16 471.56L465.78 473.28L466.41 474.99L467.03 476.69L467.65 478.38L468.27 480.05L468.89 481.7L469.51 483.34L470.13 484.95L470.76 486.54L471.38 488.11L472 489.66L472.62 491.18L473.24 492.67L473.86 494.13L474.49 495.56L475.11 496.96L475.73 498.32L476.35 499.65L476.97 500.95L477.59 502.2L478.21 503.42L478.84 504.59L479.46 505.73L480.08 506.82L480.7 507.87L481.32 508.88L481.94 509.84L482.56 510.75L483.19 511.62L483.81 512.43L484.43 513.2L485.05 513.92L485.67 514.59L486.29 515.21L486.91 515.78L487.54 516.29L488.16 516.75L488.78 517.16L489.4 517.51L490.02 517.81L490.64 518.06L491.26 518.25L491.89 518.39L492.51 518.47L493.13 518.5L493.75 518.47L494.37 518.39L494.99 518.25L495.61 518.06L496.24 517.81L496.86 517.51L497.48 517.16L498.1 516.75L498.72 516.29L499.34 515.78L499.96 515.21L500.59 514.59L501.21 513.92L501.83 513.2L502.45 512.43L503.07 511.62L503.69 510.75L504.31 509.84L504.94 508.88L505.56 507.87L506.18 506.82L506.8 505.73L507.42 504.59L508.04 503.42L508.66 502.2L509.29 500.95L509.91 499.65L510.53 498.32L511.15 496.96L511.77 495.56L512.39 494.13L513.01 492.67L513.64 491.18L514.26 489.66L514.88 488.11L515.5 486.54L516.12 484.95L516.74 483.34L517.36 481.7L517.99 480.05L518.61 478.38L519.23 476.69L519.85 474.99L520.47 473.28L521.09 471.56L521.71 469.82L522.34 468.09L522.96 466.34L523.58 464.6L524.2 462.85" stroke="#ffff11" stroke-width="2.7" fill="none" stroke-linejoin="round"/>
<path d="M24.95 462.85h4.2M27.05 460.85v4.0M26.32 459.01h4.2M28.42 457.01v4.0M27.06 456.92h4.2M29.16 454.92v4.0M28.8 452.08h4.2M30.9 450.08v4.0M30.17 448.33h4.2M32.27 446.33v4.0M30.67 446.99h4.2M32.77 444.99v4.0M31.16 445.65h4.2M33.26 443.65v4.0M31.66 444.33h4.2M33.76 442.33v4.0M32.16 443.02h4.2M34.26 441.02v4.0M33.9 438.52h4.2M36 436.52v4.0M34.4 437.27h4.2M36.5 435.27v4.0M34.89 436.04h4.2M36.99 434.04v4.0M35.89 433.62h4.2M37.99 431.62v4.0M36.38 432.44h4.2M38.48 430.44v4.0M37.75 429.3h4.2M39.85 427.3v4.0M38.25 428.19h4.2M40.35 426.19v4.0M39.24 426.05h4.2M41.34 424.05v4.0M39.74 425.01h4.2M41.84 423.01v4.0M40.49 423.5h4.2M42.59 421.5v4.0M40.98 422.52h4.2M43.08 420.52v4.0M41.73 421.11h4.2M43.83 419.11v4.0M42.23 420.19h4.2M44.33 418.19v4.0M43.22 418.45h4.2M45.32 416.45v4.0M43.97 417.22h4.2M46.07 415.22v4.0M45.71 414.6h4.2M47.81 412.6v4.0M47.45 412.35h4.2M49.55 410.35v4.0M49.19 410.49h4.2M51.29 408.49v4.0M50.55 409.31h4.2M52.65 407.31v4.0M51.05 408.95h4.2M53.15 406.95v4.0M51.55 408.62h4.2M53.65 406.62v4.0M52.04 408.32h4.2M54.14 406.32v4.0M53.04 407.83h4.2M55.14 405.83v4.0M54.41 407.39h4.2M56.51 405.39v4.0M56.15 407.2h4.2M58.25 405.2v4.0M57.51 407.36h4.2M59.61 405.36v4.0M58.51 407.64h4.2M60.61 405.64v4.0M59.87 408.25h4.2M61.97 406.25v4.0M60.87 408.86h4.2M62.97 406.86v4.0M62.61 410.26h4.2M64.71 408.26v4.0M63.98 411.64h4.2M66.08 409.64v4.0M65.72 413.75h4.2M67.82 411.75v4.0M66.71 415.13h4.2M68.81 413.13v4.0M67.21 415.86h4.2M69.31 413.86v4.0M67.95 417.02h4.2M70.05 415.02v4.0M68.45 417.83h4.2M70.55 415.83v4.0M69.44 419.53h4.2M71.54 417.53v4.0M69.94 420.42h4.2M72.04 418.42v4.0M70.69 421.81h4.2M72.79 419.81v4.0M71.18 422.76h4.2M73.28 420.76v4.0M72.55 425.53h4.2M74.65 423.53v4.0M73.55 427.65h4.2M75.65 425.65v4.0M74.29 429.3h4.2M76.39 427.3v4.0M75.04 430.99h4.2M77.14 428.99v4.0M76.78 435.13h4.2M78.88 433.13v4.0M78.52 439.47h4.2M80.62 437.47v4.0M79.51 442.04h4.2M81.61 440.04v4.0M81.25 446.65h4.2M83.35 444.65v4.0M82.62 450.37h4.2M84.72 448.37v4.0M83.99 454.14h4.2M86.09 452.14v4.0M85.73 459.01h4.2M87.83 457.01v4.0M86.72 461.8h4.2M88.82 459.8v4.0M87.22 463.2h4.2M89.32 461.2v4.0M87.72 464.6h4.2M89.82 462.6v4.0M88.46 466.69h4.2M90.56 464.69v4.0M90.2 471.56h4.2M92.3 469.56v4.0M91.57 475.33h4.2M93.67 473.33v4.0M92.31 477.37h4.2M94.41 475.37v4.0M93.68 481.04h4.2M95.78 479.04v4.0M95.05 484.63h4.2M97.15 482.63v4.0M96.04 487.18h4.2M98.14 485.18v4.0M97.41 490.57h4.2M99.51 488.57v4.0M98.78 493.84h4.2M100.88 491.84v4.0M99.52 495.56h4.2M101.62 493.56v4.0M100.52 497.78h4.2M102.62 495.78v4.0M101.51 499.91h4.2M103.61 497.91v4.0M102.88 502.69h4.2M104.98 500.69v4.0M104.25 505.28h4.2M106.35 503.28v4.0M105.99 508.28h4.2M108.09 506.28v4.0M106.98 509.84h4.2M109.08 507.84v4.0M108.35 511.78h4.2M110.45 509.78v4.0M109.34 513.05h4.2M111.44 511.05v4.0M110.34 514.2h4.2M112.44 512.2v4.0M112.08 515.88h4.2M114.18 513.88v4.0M112.82 516.48h4.2M114.92 514.48v4.0M113.57 517h4.2M115.67 515v4.0M114.31 517.45h4.2M116.41 515.45v4.0M114.81 517.7h4.2M116.91 515.7v4.0M116.18 518.22h4.2M118.28 516.22v4.0M117.17 518.43h4.2M119.27 516.43v4.0M117.67 518.48h4.2M119.77 516.48v4.0M118.41 518.5h4.2M120.51 516.5v4.0M119.78 518.31h4.2M121.88 516.31v4.0M120.28 518.18h4.2M122.38 516.18v4.0M120.78 518.02h4.2M122.88 516.02v4.0M121.77 517.58h4.2M123.87 515.58v4.0M123.14 516.75h4.2M125.24 514.75v4.0M124.13 515.99h4.2M126.23 513.99v4.0M124.63 515.56h4.2M126.73 513.56v4.0M125.37 514.85h4.2M127.47 512.85v4.0M127.11 512.9h4.2M129.21 510.9v4.0M127.86 511.95h4.2M129.96 509.95v4.0M129.23 510.02h4.2M131.33 508.02v4.0M130.22 508.48h4.2M132.32 506.48v4.0M131.22 506.82h4.2M133.32 504.82v4.0M131.71 505.95h4.2M133.81 503.95v4.0M132.21 505.05h4.2M134.31 503.05v4.0M133.58 502.45h4.2M135.68 500.45v4.0M135.32 498.86h4.2M137.42 496.86v4.0M136.31 496.68h4.2M138.41 494.68v4.0M137.06 494.99h4.2M139.16 492.99v4.0M137.55 493.84h4.2M139.65 491.84v4.0M139.29 489.66h4.2M141.39 487.66v4.0M140.29 487.18h4.2M142.39 485.18v4.0M141.28 484.63h4.2M143.38 482.63v4.0M142.65 481.04h4.2M144.75 479.04v4.0M144.39 476.35h4.2M146.49 474.35v4.0M145.38 473.62h4.2M147.48 471.62v4.0M145.88 472.25h4.2M147.98 470.25v4.0M146.63 470.17h4.2M148.73 468.17v4.0M148.37 465.3h4.2M150.47 463.3v4.0M148.86 463.9h4.2M150.96 461.9v4.0M150.6 459.01h4.2M152.7 457.01v4.0M151.97 455.18h4.2M154.07 453.18v4.0M152.97 452.42h4.2M155.07 450.42v4.0M153.46 451.05h4.2M155.56 449.05v4.0M155.2 446.32h4.2M157.3 444.32v4.0M156.57 442.69h4.2M158.67 440.69v4.0M157.56 440.11h4.2M159.66 438.11v4.0M158.93 436.66h4.2M161.03 434.66v4.0M160.3 433.33h4.2M162.4 431.33v4.0M161.29 430.99h4.2M163.39 428.99v4.0M161.79 429.86h4.2M163.89 427.86v4.0M162.78 427.65h4.2M164.88 425.65v4.0M164.52 424h4.2M166.62 422v4.0M165.27 422.52h4.2M167.37 420.52v4.0M166.64 419.97h4.2M168.74 417.97v4.0M167.13 419.09h4.2M169.23 417.09v4.0M167.88 417.83h4.2M169.98 415.83v4.0M169.62 415.13h4.2M171.72 413.13v4.0M170.12 414.42h4.2M172.22 412.42v4.0M170.61 413.75h4.2M172.71 411.75v4.0M171.11 413.11h4.2M173.21 411.11v4.0M172.48 411.5h4.2M174.58 409.5v4.0M173.47 410.49h4.2M175.57 408.49v4.0M173.97 410.03h4.2M176.07 408.03v4.0M175.34 408.95h4.2M177.44 406.95v4.0M176.08 408.47h4.2M178.18 406.47v4.0M176.83 408.06h4.2M178.93 406.06v4.0M178.2 407.52h4.2M180.3 405.52v4.0M178.69 407.39h4.2M180.79 405.39v4.0M179.19 407.29h4.2M181.29 405.29v4.0M179.94 407.21h4.2M182.04 405.21v4.0M180.68 407.21h4.2M182.78 405.21v4.0M181.18 407.25h4.2M183.28 405.25v4.0M181.93 407.39h4.2M184.03 405.39v4.0M183.29 407.83h4.2M185.39 405.83v4.0M184.66 408.54h4.2M186.76 406.54v4.0M185.16 408.86h4.2M187.26 406.86v4.0M185.9 409.41h4.2M188 407.41v4.0M186.9 410.26h4.2M189 408.26v4.0M187.89 411.24h4.2M189.99 409.24v4.0M189.63 413.27h4.2M191.73 411.27v4.0M190.38 414.25h4.2M192.48 412.25v4.0M191.37 415.68h4.2M193.47 413.68v4.0M192.74 417.83h4.2M194.84 415.83v4.0M193.73 419.53h4.2M195.83 417.53v4.0M195.1 422.04h4.2M197.2 420.04v4.0M196.09 424h4.2M198.19 422v4.0M197.09 426.05h4.2M199.19 424.05v4.0M198.46 429.02h4.2M200.56 427.02v4.0M199.82 432.15h4.2M201.92 430.15v4.0M200.82 434.52h4.2M202.92 432.52v4.0M202.56 438.84h4.2M204.66 436.84v4.0M203.92 442.36h4.2M206.02 440.36v4.0M205.66 446.99h4.2M207.76 444.99v4.0M206.41 449.01h4.2M208.51 447.01v4.0M207.16 451.05h4.2M209.26 449.05v4.0M207.9 453.11h4.2M210 451.11v4.0M209.64 457.96h4.2M211.74 455.96v4.0M211.01 461.8h4.2M213.11 459.8v4.0M211.75 463.9h4.2M213.85 461.9v4.0M212.25 465.3h4.2M214.35 463.3v4.0M212.75 466.69h4.2M214.85 464.69v4.0M214.49 471.56h4.2M216.59 469.56v4.0M216.23 476.35h4.2M218.33 474.35v4.0M217.22 479.05h4.2M219.32 477.05v4.0M218.96 483.66h4.2M221.06 481.66v4.0M219.96 486.23h4.2M222.06 484.23v4.0M221.7 490.57h4.2M223.8 488.57v4.0M223.06 493.84h4.2M225.16 491.84v4.0M224.06 496.12h4.2M226.16 494.12v4.0M225.8 499.91h4.2M227.9 497.91v4.0M227.54 503.42h4.2M229.64 501.42v4.0M228.53 505.28h4.2M230.63 503.28v4.0M229.53 507.04h4.2M231.63 505.04v4.0M230.52 508.68h4.2M232.62 506.68v4.0M231.02 509.46h4.2M233.12 507.46v4.0M231.76 510.57h4.2M233.86 508.57v4.0M232.76 511.95h4.2M234.86 509.95v4.0M233.5 512.9h4.2M235.6 510.9v4.0M234.5 514.06h4.2M236.6 512.06v4.0M235.87 515.44h4.2M237.97 513.44v4.0M236.61 516.09h4.2M238.71 514.09v4.0M238.35 517.31h4.2M240.45 515.31v4.0M240.09 518.1h4.2M242.19 516.1v4.0M241.46 518.43h4.2M243.56 516.43v4.0M243.2 518.46h4.2M245.3 516.46v4.0M243.7 518.39h4.2M245.8 516.39v4.0M245.06 518.02h4.2M247.16 516.02v4.0M245.56 517.81h4.2M247.66 515.81v4.0M246.31 517.45h4.2M248.41 515.45v4.0M247.67 516.57h4.2M249.77 514.57v4.0M249.04 515.44h4.2M251.14 513.44v4.0M250.41 514.06h4.2M252.51 512.06v4.0M251.4 512.9h4.2M253.5 510.9v4.0M252.4 511.62h4.2M254.5 509.62v4.0M253.76 509.65h4.2M255.86 507.65v4.0M254.26 508.88h4.2M256.36 506.88v4.0M255.01 507.67h4.2M257.11 505.67v4.0M255.5 506.82h4.2M257.6 504.82v4.0M257.24 503.66h4.2M259.34 501.66v4.0M257.74 502.69h4.2M259.84 500.69v4.0M259.11 499.91h4.2M261.21 497.91v4.0M259.6 498.86h4.2M261.7 496.86v4.0M260.6 496.68h4.2M262.7 494.68v4.0M261.59 494.42h4.2M263.69 492.42v4.0M262.34 492.67h4.2M264.44 490.67v4.0M264.08 488.43h4.2M266.18 486.43v4.0M265.45 484.95h4.2M267.55 482.95v4.0M266.19 483.01h4.2M268.29 481.01v4.0M267.19 480.38h4.2M269.29 478.38v4.0M267.68 479.05h4.2M269.78 477.05v4.0M269.42 474.31h4.2M271.52 472.31v4.0M270.79 470.52h4.2M272.89 468.52v4.0M271.78 467.74h4.2M273.88 465.74v4.0M273.15 463.9h4.2M275.25 461.9v4.0M273.9 461.8h4.2M276 459.8v4.0M274.64 459.7h4.2M276.74 457.7v4.0M276.38 454.84h4.2M278.48 452.84v4.0M278.12 450.03h4.2M280.22 448.03v4.0M279.12 447.32h4.2M281.22 445.32v4.0M279.62 445.99h4.2M281.72 443.99v4.0M280.11 444.66h4.2M282.21 442.66v4.0M281.11 442.04h4.2M283.21 440.04v4.0M281.6 440.75h4.2M283.7 438.75v4.0M282.97 437.27h4.2M285.07 435.27v4.0M283.47 436.04h4.2M285.57 434.04v4.0M284.46 433.62h4.2M286.56 431.62v4.0M286.2 429.58h4.2M288.3 427.58v4.0M287.2 427.38h4.2M289.3 425.38v4.0M288.56 424.5h4.2M290.66 422.5v4.0M289.06 423.5h4.2M291.16 421.5v4.0M289.56 422.52h4.2M291.66 420.52v4.0M291.3 419.31h4.2M293.4 417.31v4.0M293.04 416.43h4.2M295.14 414.43v4.0M293.78 415.31h4.2M295.88 413.31v4.0M295.15 413.43h4.2M297.25 411.43v4.0M296.89 411.37h4.2M298.99 409.37v4.0M297.89 410.37h4.2M299.99 408.37v4.0M299.63 408.95h4.2M301.73 406.95v4.0M301.37 407.94h4.2M303.47 405.94v4.0M303.11 407.36h4.2M305.21 405.36v4.0M304.85 407.2h4.2M306.95 405.2v4.0M306.59 407.48h4.2M308.69 405.48v4.0M308.33 408.19h4.2M310.43 406.19v4.0M310.07 409.31h4.2M312.17 407.31v4.0M310.56 409.71h4.2M312.66 407.71v4.0M311.56 410.61h4.2M313.66 408.61v4.0M312.92 412.06h4.2M315.02 410.06v4.0M313.67 412.95h4.2M315.77 410.95v4.0M314.17 413.59h4.2M316.27 411.59v4.0M314.66 414.25h4.2M316.76 412.25v4.0M316.4 416.82h4.2M318.5 414.82v4.0M317.15 418.03h4.2M319.25 416.03v4.0M317.65 418.88h4.2M319.75 416.88v4.0M318.39 420.19h4.2M320.49 418.19v4.0M318.89 421.11h4.2M320.99 419.11v4.0M319.88 423.01h4.2M321.98 421.01v4.0M320.63 424.5h4.2M322.73 422.5v4.0M321.62 426.58h4.2M323.72 424.58v4.0M322.62 428.74h4.2M324.72 426.74v4.0M323.36 430.42h4.2M325.46 428.42v4.0M324.73 433.62h4.2M326.83 431.62v4.0M325.48 435.43h4.2M327.58 433.43v4.0M326.22 437.27h4.2M328.32 435.27v4.0M327.22 439.79h4.2M329.32 437.79v4.0M327.96 441.72h4.2M330.06 439.72v4.0M329.7 446.32h4.2M331.8 444.32v4.0M331.44 451.05h4.2M333.54 449.05v4.0M332.19 453.11h4.2M334.29 451.11v4.0M333.56 456.92h4.2M335.66 454.92v4.0M334.05 458.31h4.2M336.15 456.31v4.0M335.42 462.15h4.2M337.52 460.15v4.0M337.16 467.04h4.2M339.26 465.04v4.0M338.9 471.9h4.2M341 469.9v4.0M340.27 475.67h4.2M342.37 473.67v4.0M342.01 480.38h4.2M344.11 478.38v4.0M343 483.01h4.2M345.1 481.01v4.0M344.74 487.49h4.2M346.84 485.49v4.0M345.49 489.35h4.2M347.59 487.35v4.0M346.85 492.67h4.2M348.95 490.67v4.0M347.6 494.42h4.2M349.7 492.42v4.0M348.1 495.56h4.2M350.2 493.56v4.0M348.84 497.23h4.2M350.94 495.23v4.0M350.21 500.17h4.2M352.31 498.17v4.0M350.96 501.7h4.2M353.06 499.7v4.0M352.32 504.36h4.2M354.42 502.36v4.0M352.82 505.28h4.2M354.92 503.28v4.0M353.57 506.61h4.2M355.67 504.61v4.0M355.31 509.46h4.2M357.41 507.46v4.0M357.05 511.95h4.2M359.15 509.95v4.0M358.04 513.2h4.2M360.14 511.2v4.0M359.41 514.72h4.2M361.51 512.72v4.0M360.4 515.67h4.2M362.5 513.67v4.0M361.77 516.75h4.2M363.87 514.75v4.0M362.76 517.38h4.2M364.86 515.38v4.0M363.76 517.87h4.2M365.86 515.87v4.0M364.5 518.14h4.2M366.6 516.14v4.0M365.25 518.34h4.2M367.35 516.34v4.0M366.62 518.5h4.2M368.72 516.5v4.0M367.61 518.45h4.2M369.71 516.45v4.0M368.6 518.25h4.2M370.7 516.25v4.0M369.97 517.76h4.2M372.07 515.76v4.0M371.34 517h4.2M373.44 515v4.0M372.71 515.99h4.2M374.81 513.99v4.0M373.7 515.09h4.2M375.8 513.09v4.0M374.2 514.59h4.2M376.3 512.59v4.0M374.94 513.78h4.2M377.04 511.78v4.0M375.69 512.9h4.2M377.79 510.9v4.0M377.43 510.57h4.2M379.53 508.57v4.0M378.8 508.48h4.2M380.9 506.48v4.0M380.54 505.51h4.2M382.64 503.51v4.0M381.53 503.66h4.2M383.63 501.66v4.0M382.53 501.7h4.2M384.63 499.7v4.0M383.27 500.17h4.2M385.37 498.17v4.0M383.77 499.12h4.2M385.87 497.12v4.0M384.27 498.05h4.2M386.37 496.05v4.0M385.63 494.99h4.2M387.73 492.99v4.0M386.63 492.67h4.2M388.73 490.67v4.0M387.37 490.88h4.2M389.47 488.88v4.0M389.11 486.54h4.2M391.21 484.54v4.0M389.86 484.63h4.2M391.96 482.63v4.0M390.85 482.03h4.2M392.95 480.03v4.0M391.85 479.38h4.2M393.95 477.38v4.0M392.34 478.04h4.2M394.44 476.04v4.0M393.09 476.01h4.2M395.19 474.01v4.0M393.84 473.96h4.2M395.94 471.96v4.0M394.83 471.21h4.2M396.93 469.21v4.0M395.82 468.44h4.2M397.92 466.44v4.0M396.57 466.34h4.2M398.67 464.34v4.0M397.94 462.5h4.2M400.04 460.5v4.0M399.68 457.61h4.2M401.78 455.61v4.0M401.04 453.8h4.2M403.14 451.8v4.0M402.78 449.01h4.2M404.88 447.01v4.0M404.52 444.33h4.2M406.62 442.33v4.0M405.89 440.75h4.2M407.99 438.75v4.0M407.63 436.35h4.2M409.73 434.35v4.0M409 433.03h4.2M411.1 431.03v4.0M409.5 431.86h4.2M411.6 429.86v4.0M409.99 430.71h4.2M412.09 428.71v4.0M410.74 429.02h4.2M412.84 427.02v4.0M411.48 427.38h4.2M413.58 425.38v4.0M412.48 425.27h4.2M414.58 423.27v4.0M414.22 421.81h4.2M416.32 419.81v4.0M415.21 419.97h4.2M417.31 417.97v4.0M415.96 418.66h4.2M418.06 416.66v4.0M416.46 417.83h4.2M418.56 415.83v4.0M417.45 416.24h4.2M419.55 414.24v4.0M419.19 413.75h4.2M421.29 411.75v4.0M420.93 411.64h4.2M423.03 409.64v4.0M421.92 410.61h4.2M424.02 408.61v4.0M423.66 409.13h4.2M425.76 407.13v4.0M424.41 408.62h4.2M426.51 406.62v4.0M424.91 408.32h4.2M427.01 406.32v4.0M426.65 407.56h4.2M428.75 405.56v4.0M428.01 407.25h4.2M430.11 405.25v4.0M429.75 407.25h4.2M431.85 405.25v4.0M430.5 407.39h4.2M432.6 405.39v4.0M431 407.52h4.2M433.1 405.52v4.0M432.36 408.06h4.2M434.46 406.06v4.0M432.86 408.32h4.2M434.96 406.32v4.0M433.86 408.95h4.2M435.96 406.95v4.0M434.85 409.71h4.2M436.95 407.71v4.0M435.6 410.37h4.2M437.7 408.37v4.0M437.34 412.2h4.2M439.44 410.2v4.0M438.33 413.43h4.2M440.43 411.43v4.0M439.7 415.31h4.2M441.8 413.31v4.0M440.19 416.05h4.2M442.29 414.05v4.0M440.94 417.22h4.2M443.04 415.22v4.0M442.31 419.53h4.2M444.41 417.53v4.0M443.3 421.34h4.2M445.4 419.34v4.0M443.8 422.28h4.2M445.9 420.28v4.0M445.54 425.79h4.2M447.64 423.79v4.0M446.04 426.84h4.2M448.14 424.84v4.0M446.53 427.92h4.2M448.63 425.92v4.0M447.28 429.58h4.2M449.38 427.58v4.0M449.02 433.62h4.2M451.12 431.62v4.0M450.76 437.9h4.2M452.86 435.9v4.0M451.5 439.79h4.2M453.6 437.79v4.0M452.87 443.34h4.2M454.97 441.34v4.0M453.37 444.66h4.2M455.47 442.66v4.0M454.74 448.33h4.2M456.84 446.33v4.0M455.23 449.69h4.2M457.33 447.69v4.0M456.97 454.49h4.2M459.07 452.49v4.0M457.72 456.57h4.2M459.82 454.57v4.0M458.46 458.66h4.2M460.56 456.66v4.0M460.2 463.55h4.2M462.3 461.55v4.0M461.2 466.34h4.2M463.3 464.34v4.0M462.19 469.13h4.2M464.29 467.13v4.0M463.56 472.93h4.2M465.66 470.93v4.0M464.31 474.99h4.2M466.41 472.99v4.0M465.67 478.71h4.2M467.77 476.71v4.0M466.17 480.05h4.2M468.27 478.05v4.0M466.67 481.37h4.2M468.77 479.37v4.0M468.41 485.91h4.2M470.51 483.91v4.0M468.9 487.18h4.2M471 485.18v4.0M469.9 489.66h4.2M472 487.66v4.0M471.27 492.96h4.2M473.37 490.96v4.0M472.26 495.28h4.2M474.36 493.28v4.0M473.26 497.51h4.2M475.36 495.51v4.0M473.75 498.59h4.2M475.85 496.59v4.0M474.25 499.65h4.2M476.35 497.65v4.0M475 501.2h4.2M477.1 499.2v4.0M475.74 502.69h4.2M477.84 500.69v4.0M477.48 505.95h4.2M479.58 503.95v4.0M479.22 508.88h4.2M481.32 506.88v4.0M479.97 510.02h4.2M482.07 508.02v4.0M480.96 511.45h4.2M483.06 509.45v4.0M482.7 513.64h4.2M484.8 511.64v4.0M483.2 514.2h4.2M485.3 512.2v4.0M484.57 515.56h4.2M486.67 513.56v4.0M485.93 516.66h4.2M488.03 514.66v4.0M486.93 517.31h4.2M489.03 515.31v4.0M488.29 517.97h4.2M490.39 515.97v4.0M489.29 518.28h4.2M491.39 516.28v4.0M489.79 518.39h4.2M491.89 516.39v4.0M491.15 518.5h4.2M493.25 516.5v4.0M492.15 518.41h4.2M494.25 516.41v4.0M493.14 518.18h4.2M495.24 516.18v4.0M493.64 518.02h4.2M495.74 516.02v4.0M495.01 517.38h4.2M497.11 515.38v4.0M496.37 516.48h4.2M498.47 514.48v4.0M497.37 515.67h4.2M499.47 513.67v4.0M498.11 514.97h4.2M500.21 512.97v4.0M498.61 514.46h4.2M500.71 512.46v4.0M499.36 513.64h4.2M501.46 511.64v4.0M500.35 512.43h4.2M502.45 510.43v4.0M501.1 511.45h4.2M503.2 509.45v4.0M502.46 509.46h4.2M504.56 507.46v4.0M503.83 507.25h4.2M505.93 505.25v4.0M504.82 505.51h4.2M506.92 503.51v4.0M505.32 504.59h4.2M507.42 502.59v4.0M506.69 501.95h4.2M508.79 499.95v4.0M508.06 499.12h4.2M510.16 497.12v4.0M508.8 497.51h4.2M510.9 495.51v4.0M509.55 495.84h4.2M511.65 493.84v4.0M510.04 494.71h4.2M512.14 492.71v4.0M510.54 493.55h4.2M512.64 491.55v4.0M511.91 490.27h4.2M514.01 488.27v4.0M513.28 486.86h4.2M515.38 484.86v4.0M515.02 482.36h4.2M517.12 480.36v4.0M515.76 480.38h4.2M517.86 478.38v4.0M516.26 479.05h4.2M518.36 477.05v4.0M517 477.03h4.2M519.1 475.03v4.0M517.75 474.99h4.2M519.85 472.99v4.0M518.25 473.62h4.2M520.35 471.62v4.0M518.99 471.56h4.2M521.09 469.56v4.0M520.73 466.69h4.2M522.83 464.69v4.0M521.23 465.3h4.2M523.33 463.3v4.0M521.98 463.2h4.2M524.08 461.2v4.0" stroke="#ffff11" stroke-width="1.5" fill="none"/>
<path d="M29.32 457.01v4M33.67 444.99v4M35.16 441.02v4M39.38 430.44v4M41.25 426.19v4M42.24 424.05v4M43.49 421.5v4M45.23 418.19v4M50.45 410.35v4M53.55 407.31v4M54.05 406.95v4M55.04 406.32v4M56.04 405.83v4M57.41 405.39v4M59.15 405.2v4M66.98 409.64v4M68.72 411.75v4M70.21 413.86v4M73.69 419.81v4M74.18 420.76v4M76.55 425.65v4M90.22 461.2v4M90.72 462.6v4M91.46 464.69v4M93.2 469.56v4M94.57 473.33v4M95.31 475.37v4M96.68 479.04v4M99.04 485.18v4M100.41 488.57v4M102.52 493.56v4M105.88 500.69v4M108.99 506.28v4M109.98 507.84v4M111.35 509.78v4M115.08 513.88v4M117.81 515.7v4M119.18 516.22v4M121.41 516.5v4M124.77 515.58v4M127.13 513.99v4M130.11 510.9v4M134.22 504.82v4M134.71 503.95v4M140.06 492.99v4M142.29 487.66v4M145.65 479.04v4M147.39 474.35v4M148.38 471.62v4M151.86 461.9v4M154.97 453.18v4M155.97 450.42v4M156.46 449.05v4M159.57 440.69v4M160.56 438.11v4M163.3 431.33v4M164.29 428.99v4M167.52 422v4M172.62 413.13v4M176.97 408.03v4M179.08 406.47v4M181.69 405.39v4M182.19 405.29v4M182.94 405.21v4M187.66 406.54v4M188.16 406.86v4M188.9 407.41v4M189.9 408.26v4M192.63 411.27v4M193.38 412.25v4M195.74 415.83v4M198.1 420.04v4M206.92 440.36v4M208.66 444.99v4M209.41 447.01v4M210.16 449.05v4M210.9 451.11v4M214.75 461.9v4M215.25 463.3v4M220.22 477.05v4M222.96 484.23v4M224.7 488.57v4M228.8 497.91v4M232.53 505.04v4M233.52 506.68v4M236.5 510.9v4M238.87 513.44v4M243.09 516.1v4M246.7 516.39v4M248.06 516.02v4M248.56 515.81v4M249.31 515.45v4M254.4 510.9v4M258.01 505.67v4M258.5 504.82v4M260.24 501.66v4M260.74 500.69v4M262.11 497.91v4M262.6 496.86v4M267.08 486.43v4M268.45 482.95v4M273.79 468.52v4M274.78 465.74v4M277.64 457.7v4M283.11 442.66v4M284.11 440.04v4M284.6 438.75v4M289.2 427.58v4M290.2 425.38v4M296.78 413.31v4M299.89 409.37v4M302.63 406.95v4M304.37 405.94v4M306.11 405.36v4M307.85 405.2v4M309.59 405.48v4M313.07 407.31v4M316.67 410.95v4M319.4 414.82v4M320.15 416.03v4M320.65 416.88v4M321.39 418.19v4M321.89 419.11v4M322.88 421.01v4M323.63 422.5v4M324.62 424.58v4M326.36 428.42v4M327.73 431.62v4M328.48 433.43v4M329.22 435.27v4M332.7 444.32v4M336.56 454.92v4M340.16 465.04v4M343.27 473.67v4M348.49 487.35v4M349.85 490.67v4M351.1 493.56v4M355.32 502.36v4M367.5 516.14v4M372.97 515.76v4M376.7 513.09v4M377.94 511.78v4M378.69 510.9v4M383.54 503.51v4M384.53 501.66v4M386.77 497.12v4M388.63 492.99v4M390.37 488.88v4M392.86 482.63v4M399.57 464.34v4M400.94 460.5v4M402.68 455.61v4M408.89 438.75v4M410.63 434.35v4M412 431.03v4M412.5 429.86v4M412.99 428.71v4M415.48 423.27v4M418.21 417.97v4M418.96 416.66v4M420.45 414.24v4M422.19 411.75v4M424.92 408.61v4M426.66 407.13v4M427.41 406.62v4M429.65 405.56v4M434 405.52v4M435.36 406.06v4M435.86 406.32v4M437.85 407.71v4M438.6 408.37v4M443.19 414.05v4M443.94 415.22v4M445.31 417.53v4M448.54 423.79v4M449.04 424.84v4M450.28 427.58v4M453.76 435.9v4M456.37 442.66v4M458.23 447.69v4M461.46 456.66v4M463.2 461.55v4M465.19 467.13v4M466.56 470.93v4M468.67 476.71v4M469.67 479.37v4M471.9 485.18v4M472.9 487.66v4M477.25 497.65v4M478 499.2v4M482.22 506.88v4M482.97 508.02v4M485.7 511.64v4M486.2 512.2v4M492.79 516.39v4M496.14 516.18v4M502.36 511.64v4M503.35 510.43v4M505.46 507.46v4M507.82 503.51v4M508.32 502.59v4M509.69 499.95v4M511.06 497.12v4M511.8 495.51v4M521.99 469.56v4M524.23 463.3v4" stroke="#1a1a00" stroke-width="0.8" fill="none" opacity="0.7"/>
</g>
<text x="276.02" y="386.7" font-size="14.67" text-anchor="middle">data2</text>
<text x="21.05" y="523.2" font-size="12" text-anchor="end">-1</text>
<text x="21.05" y="495.38" font-size="12" text-anchor="end">-0.5</text>
<text x="21.05" y="467.55" font-size="12" text-anchor="end">0</text>
<text x="21.05" y="439.72" font-size="12" text-anchor="end">0.5</text>
<text x="21.05" y="411.9" font-size="12" text-anchor="end">1</text>
<text x="27.05" y="550.35" font-size="12" text-anchor="middle">0</text>
<text x="89.19" y="550.35" font-size="12" text-anchor="middle">0.5</text>
<text x="151.34" y="550.35" font-size="12" text-anchor="middle">1</text>
<text x="213.48" y="550.35" font-size="12" text-anchor="middle">1.5</text>
<text x="275.62" y="550.35" font-size="12" text-anchor="middle">2</text>
<text x="337.77" y="550.35" font-size="12" text-anchor="middle">2.5</text>
<text x="399.91" y="550.35" font-size="12" text-anchor="middle">3</text>
<text x="462.06" y="550.35" font-size="12" text-anchor="middle">3.5</text>
<text x="524.2" y="550.35" font-size="12" text-anchor="middle">4</text>
<rect x="568.05" y="392.7" width="495.95" height="140.65" fill="#000"/>
<path d="M630.04 392.7V533.35M692.04 392.7V533.35M754.03 392.7V533.35M816.02 392.7V533.35M878.02 392.7V533.35M940.01 392.7V533.35M1002.01 392.7V533.35" stroke="#b4b4b4" stroke-opacity="0.4" stroke-width="1.1" fill="none"/>
<path d="M568.05 519H1064M568.05 496.6H1064M568.05 474.2H1064M568.05 451.8H1064M568.05 429.4H1064M568.05 407H1064" stroke="#b4b4b4" stroke-opacity="0.42" stroke-width="1.1" fill="none"/>
<path d="M630.04 392.7v4.3M630.04 533.35v-4.3M692.04 392.7v4.3M692.04 533.35v-4.3M754.03 392.7v4.3M754.03 533.35v-4.3M816.02 392.7v4.3M816.02 533.35v-4.3M878.02 392.7v4.3M878.02 533.35v-4.3M940.01 392.7v4.3M940.01 533.35v-4.3M1002.01 392.7v4.3M1002.01 533.35v-4.3M568.05 519h4.3M1064 519h-4.3M568.05 496.6h4.3M1064 496.6h-4.3M568.05 474.2h4.3M1064 474.2h-4.3M568.05 451.8h4.3M1064 451.8h-4.3M568.05 429.4h4.3M1064 429.4h-4.3M568.05 407h4.3M1064 407h-4.3" stroke="#afafaf" stroke-width="1" fill="none" opacity="0.8"/>
<rect x="568" y="392.7" width="495.65" height="140.65" fill="none" stroke="#9e9e9e" stroke-width="1.25"/>
<clipPath id="cvalid_out"><rect x="566.05" y="392.7" width="499.95" height="140.65"/></clipPath>
<g clip-path="url(#cvalid_out)">
<path d="M568.05 517v4.0M568.81 517v4.0M569.44 517v4.0M570.16 517v4.0M571.05 517v4.0M571.7 517v4.0M572.5 517v4.0M573.28 517v4.0M574.02 517v4.0M574.8 517v4.0M575.55 517v4.0M577.56 517v4.0M579.08 517v4.0M579.85 517v4.0M582.18 517v4.0M582.93 517v4.0M583.59 517v4.0M584.22 517v4.0M584.88 517v4.0M585.54 517v4.0M586.25 517v4.0M587.1 517v4.0M587.95 517v4.0M588.65 517v4.0M589.46 517v4.0M591.54 517v4.0M593.06 517v4.0M593.88 517v4.0M596.69 517v4.0M597.35 517v4.0M598.16 517v4.0M598.76 517v4.0M599.55 517v4.0M600.38 517v4.0M601.05 517v4.0M601.69 517v4.0M602.37 517v4.0M603.14 517v4.0M603.97 517v4.0M606.29 517v4.0M607.65 517v4.0M608.35 517v4.0M610.55 517v4.0M611.2 517v4.0M611.99 517v4.0M612.81 517v4.0M613.54 517v4.0M614.21 517v4.0M614.97 517v4.0M615.68 517v4.0M616.45 517v4.0M617.29 517v4.0M618.04 517v4.0M620.47 517v4.0M621.78 517v4.0M622.48 517v4.0M624.55 517v4.0M625.28 517v4.0M626.1 517v4.0M626.91 517v4.0M627.74 517v4.0M628.57 517v4.0M629.23 517v4.0M630.05 517v4.0M630.83 517v4.0M631.46 517v4.0M632.1 517v4.0M634.41 517v4.0M635.95 517v4.0M636.62 517v4.0M638.65 517v4.0M639.47 517v4.0M640.25 517v4.0M640.86 517v4.0M641.73 517v4.0M642.49 517v4.0M643.09 517v4.0M643.81 517v4.0M644.62 517v4.0M645.51 517v4.0M646.16 517v4.0M648.14 517v4.0M649.8 517v4.0M650.5 517v4.0M653.33 517v4.0M654.01 517v4.0M654.86 517v4.0M655.51 517v4.0M656.25 517v4.0M656.98 517v4.0M657.78 517v4.0M658.6 517v4.0M659.47 517v4.0M660.16 517v4.0M660.93 517v4.0M663.44 517v4.0M664.64 517v4.0M665.25 517v4.0M667.54 517v4.0M668.21 517v4.0M668.96 517v4.0M669.75 517v4.0M670.4 517v4.0M671.21 517v4.0M672.09 517v4.0M672.78 517v4.0M673.48 517v4.0M674.08 517v4.0M674.74 517v4.0M677.06 517v4.0M678.26 517v4.0M679.03 517v4.0M681.99 517v4.0M682.64 517v4.0M683.42 517v4.0M684.17 517v4.0M684.86 517v4.0M685.6 517v4.0M686.2 517v4.0M686.93 517v4.0M687.66 517v4.0M688.45 517v4.0M689.26 517v4.0M691.36 517v4.0M692.04 405v4.0M692.83 405v4.0M693.49 405v4.0M694.11 405v4.0M694.73 405v4.0M695.43 405v4.0M696.26 405v4.0M696.87 405v4.0M697.6 405v4.0M698.23 405v4.0M699.09 405v4.0M701.79 405v4.0M703.17 405v4.0M703.9 405v4.0M706.86 405v4.0M707.54 405v4.0M708.23 405v4.0M709.11 405v4.0M709.96 405v4.0M710.77 405v4.0M711.55 405v4.0M712.15 405v4.0M712.97 405v4.0M713.7 405v4.0M714.5 405v4.0M716.83 405v4.0M718.33 405v4.0M719.05 405v4.0M721.5 405v4.0M722.28 405v4.0M723.15 405v4.0M723.83 405v4.0M724.61 405v4.0M725.23 405v4.0M726.05 405v4.0M726.81 405v4.0M727.5 405v4.0M728.34 405v4.0M729.01 405v4.0M731.89 405v4.0M733.4 405v4.0M734.08 405v4.0M736.41 405v4.0M737.23 405v4.0M737.87 405v4.0M738.58 405v4.0M739.23 405v4.0M739.94 405v4.0M740.62 405v4.0M741.35 405v4.0M742.24 405v4.0M742.98 405v4.0M743.82 405v4.0M746.72 405v4.0M748.28 405v4.0M748.88 405v4.0M751.59 405v4.0M752.32 405v4.0M752.93 405v4.0M753.72 405v4.0M754.47 405v4.0M755.31 405v4.0M755.98 405v4.0M756.84 405v4.0M757.59 405v4.0M758.41 405v4.0M759.24 405v4.0M761.96 405v4.0M763.65 405v4.0M764.54 405v4.0M766.61 405v4.0M767.42 405v4.0M768.25 405v4.0M769.08 405v4.0M769.79 405v4.0M770.44 405v4.0M771.29 405v4.0M772.09 405v4.0M772.98 405v4.0M773.84 405v4.0M774.51 405v4.0M777.48 405v4.0M779.23 405v4.0M780.01 405v4.0M782.23 405v4.0M783.03 405v4.0M783.66 405v4.0M784.36 405v4.0M785.01 405v4.0M785.76 405v4.0M786.39 405v4.0M787.08 405v4.0M787.76 405v4.0M788.54 405v4.0M789.4 405v4.0M792.02 405v4.0M793.67 405v4.0M794.32 405v4.0M796.76 405v4.0M797.53 405v4.0M798.21 405v4.0M799.1 405v4.0M799.84 405v4.0M800.51 405v4.0M801.16 405v4.0M801.77 405v4.0M802.62 405v4.0M803.24 405v4.0M804.08 405v4.0M806.24 405v4.0M807.71 405v4.0M808.41 405v4.0M810.56 405v4.0M811.26 405v4.0M812.1 405v4.0M812.84 405v4.0M813.59 405v4.0M814.34 405v4.0M814.94 405v4.0M815.7 405v4.0M816.49 405v4.0M817.18 405v4.0M817.95 405v4.0M820.49 405v4.0M821.89 405v4.0M822.72 405v4.0M825.05 405v4.0M825.75 405v4.0M826.48 405v4.0M827.28 405v4.0M827.99 405v4.0M828.73 405v4.0M829.44 405v4.0M830.04 405v4.0M830.83 405v4.0M831.66 405v4.0M832.28 405v4.0M835.17 405v4.0M836.61 405v4.0M837.31 405v4.0M839.31 405v4.0M840.19 405v4.0M841.02 405v4.0M841.74 405v4.0M842.34 405v4.0M843.14 405v4.0M843.87 405v4.0M844.54 405v4.0M845.15 405v4.0M845.88 405v4.0M846.75 405v4.0M849.67 405v4.0M850.97 405v4.0M851.84 405v4.0M854.17 405v4.0M854.89 405v4.0M855.49 405v4.0M856.15 405v4.0M856.92 405v4.0M857.81 405v4.0M858.47 405v4.0M859.35 405v4.0M860.06 405v4.0M860.86 405v4.0M861.54 405v4.0M863.68 405v4.0M865.09 405v4.0M865.9 405v4.0M868.13 405v4.0M868.77 405v4.0M869.45 405v4.0M870.08 405v4.0M870.94 405v4.0M871.82 405v4.0M872.64 405v4.0M873.4 405v4.0M874.24 405v4.0M874.96 405v4.0M875.82 405v4.0M878.55 405v4.0M879.98 405v4.0M880.65 405v4.0M883.02 405v4.0M883.78 405v4.0M884.4 405v4.0M885.11 405v4.0M885.74 405v4.0M886.59 405v4.0M887.39 405v4.0M888.09 405v4.0M888.92 405v4.0M889.59 405v4.0M890.44 405v4.0M893.11 405v4.0M894.69 405v4.0M895.48 405v4.0M898.23 405v4.0M898.87 405v4.0M899.57 405v4.0M900.18 405v4.0M901.07 405v4.0M901.76 405v4.0M902.54 405v4.0M903.37 405v4.0M904.18 405v4.0M904.83 405v4.0M905.64 405v4.0M908.02 405v4.0M909.69 405v4.0M910.48 405v4.0M912.68 405v4.0M913.35 405v4.0M914.2 405v4.0M914.87 405v4.0M915.54 405v4.0M916.41 405v4.0M917.04 405v4.0M917.85 405v4.0M918.6 405v4.0M919.48 405v4.0M920.08 405v4.0M922.94 405v4.0M924.37 405v4.0M925.22 405v4.0M928.15 405v4.0M928.99 405v4.0M929.75 405v4.0M930.62 405v4.0M931.31 405v4.0M932.01 405v4.0M932.83 405v4.0M933.46 405v4.0M934.33 405v4.0M934.98 405v4.0M935.87 405v4.0M938.61 405v4.0M940.2 405v4.0M940.88 405v4.0M943.1 405v4.0M943.89 405v4.0M944.66 405v4.0M945.49 405v4.0M946.23 405v4.0M946.88 405v4.0M947.58 405v4.0M948.47 405v4.0M949.27 405v4.0M950.12 405v4.0M950.88 405v4.0M953.3 405v4.0M954.56 405v4.0M955.27 405v4.0M957.66 405v4.0M958.34 405v4.0M959.13 405v4.0M959.9 405v4.0M960.75 405v4.0M961.48 405v4.0M962.13 405v4.0M962.93 405v4.0M963.66 405v4.0M964.47 405v4.0M965.14 405v4.0M967.2 405v4.0M968.53 405v4.0M969.28 405v4.0M971.54 405v4.0M972.33 405v4.0M973 405v4.0M973.79 405v4.0M974.66 405v4.0M975.51 405v4.0M976.12 405v4.0M976.74 405v4.0M977.5 405v4.0M978.14 405v4.0M978.93 405v4.0M981.56 405v4.0M982.81 405v4.0M983.51 405v4.0M986.02 405v4.0M986.65 405v4.0M987.36 405v4.0M988.1 405v4.0M988.71 405v4.0M989.33 405v4.0M990.02 405v4.0M990.73 405v4.0M991.6 405v4.0M992.42 405v4.0M993.05 405v4.0M995.12 405v4.0M996.35 405v4.0M997.16 405v4.0M999.81 405v4.0M1000.66 405v4.0M1001.31 405v4.0M1001.96 405v4.0M1002.76 405v4.0M1003.38 405v4.0M1004.12 405v4.0M1004.91 405v4.0M1005.55 405v4.0M1006.21 405v4.0M1006.95 405v4.0M1009.33 405v4.0M1010.92 405v4.0M1011.78 405v4.0M1013.99 405v4.0M1014.68 405v4.0M1015.47 405v4.0M1016.33 405v4.0M1017.12 405v4.0M1017.76 405v4.0M1018.54 405v4.0M1019.27 405v4.0M1020.09 405v4.0M1020.76 405v4.0M1021.38 405v4.0M1023.54 405v4.0M1024.81 405v4.0M1025.69 405v4.0M1027.99 405v4.0M1028.65 405v4.0M1029.47 405v4.0M1030.35 405v4.0M1031.03 405v4.0M1031.75 405v4.0M1032.5 405v4.0M1033.16 405v4.0M1033.88 405v4.0M1034.73 405v4.0M1035.51 405v4.0M1038.09 405v4.0M1039.38 405v4.0M1040.17 405v4.0M1043.03 405v4.0M1043.78 405v4.0M1044.41 405v4.0M1045.14 405v4.0M1045.99 405v4.0M1046.85 405v4.0M1047.74 405v4.0M1048.35 405v4.0M1049.06 405v4.0M1049.9 405v4.0M1050.66 405v4.0M1053.5 405v4.0M1054.79 405v4.0M1055.4 405v4.0M1057.86 405v4.0M1058.69 405v4.0M1059.34 405v4.0M1060.03 405v4.0M1060.81 405v4.0M1061.67 405v4.0M1062.37 405v4.0M1063.24 405v4.0M1063.97 405v4.0" stroke="#00ff00" stroke-width="1" fill="none" opacity="0.75"/>
<path d="M692.04 520V407.5" stroke="#00ff00" stroke-width="4.0" fill="none"/>
</g>
<text x="816.42" y="386.7" font-size="14.67" text-anchor="middle">valid_out</text>
<text x="562.05" y="523.7" font-size="12" text-anchor="end">0</text>
<text x="562.05" y="501.3" font-size="12" text-anchor="end">0.2</text>
<text x="562.05" y="478.9" font-size="12" text-anchor="end">0.4</text>
<text x="562.05" y="456.5" font-size="12" text-anchor="end">0.6</text>
<text x="562.05" y="434.1" font-size="12" text-anchor="end">0.8</text>
<text x="562.05" y="411.7" font-size="12" text-anchor="end">1</text>
<text x="568.05" y="550.35" font-size="12" text-anchor="middle">0</text>
<text x="630.04" y="550.35" font-size="12" text-anchor="middle">0.5</text>
<text x="692.04" y="550.35" font-size="12" text-anchor="middle">1</text>
<text x="754.03" y="550.35" font-size="12" text-anchor="middle">1.5</text>
<text x="816.02" y="550.35" font-size="12" text-anchor="middle">2</text>
<text x="878.02" y="550.35" font-size="12" text-anchor="middle">2.5</text>
<text x="940.01" y="550.35" font-size="12" text-anchor="middle">3</text>
<text x="1002.01" y="550.35" font-size="12" text-anchor="middle">3.5</text>
<text x="1064" y="550.35" font-size="12" text-anchor="middle">4</text>
<g><rect x="1068.2" y="-2" width="12" height="8.05" fill="#000" stroke="#c4c4c4" stroke-width="1.2"/><path d="M1071.2 3.3L1073.8 -0.6L1076.4 3.3Z" fill="#fff"/><path d="M1073.8 2.5V5.6" stroke="#fff" stroke-width="1.4" fill="none"/></g>
</svg>
</body></html>
